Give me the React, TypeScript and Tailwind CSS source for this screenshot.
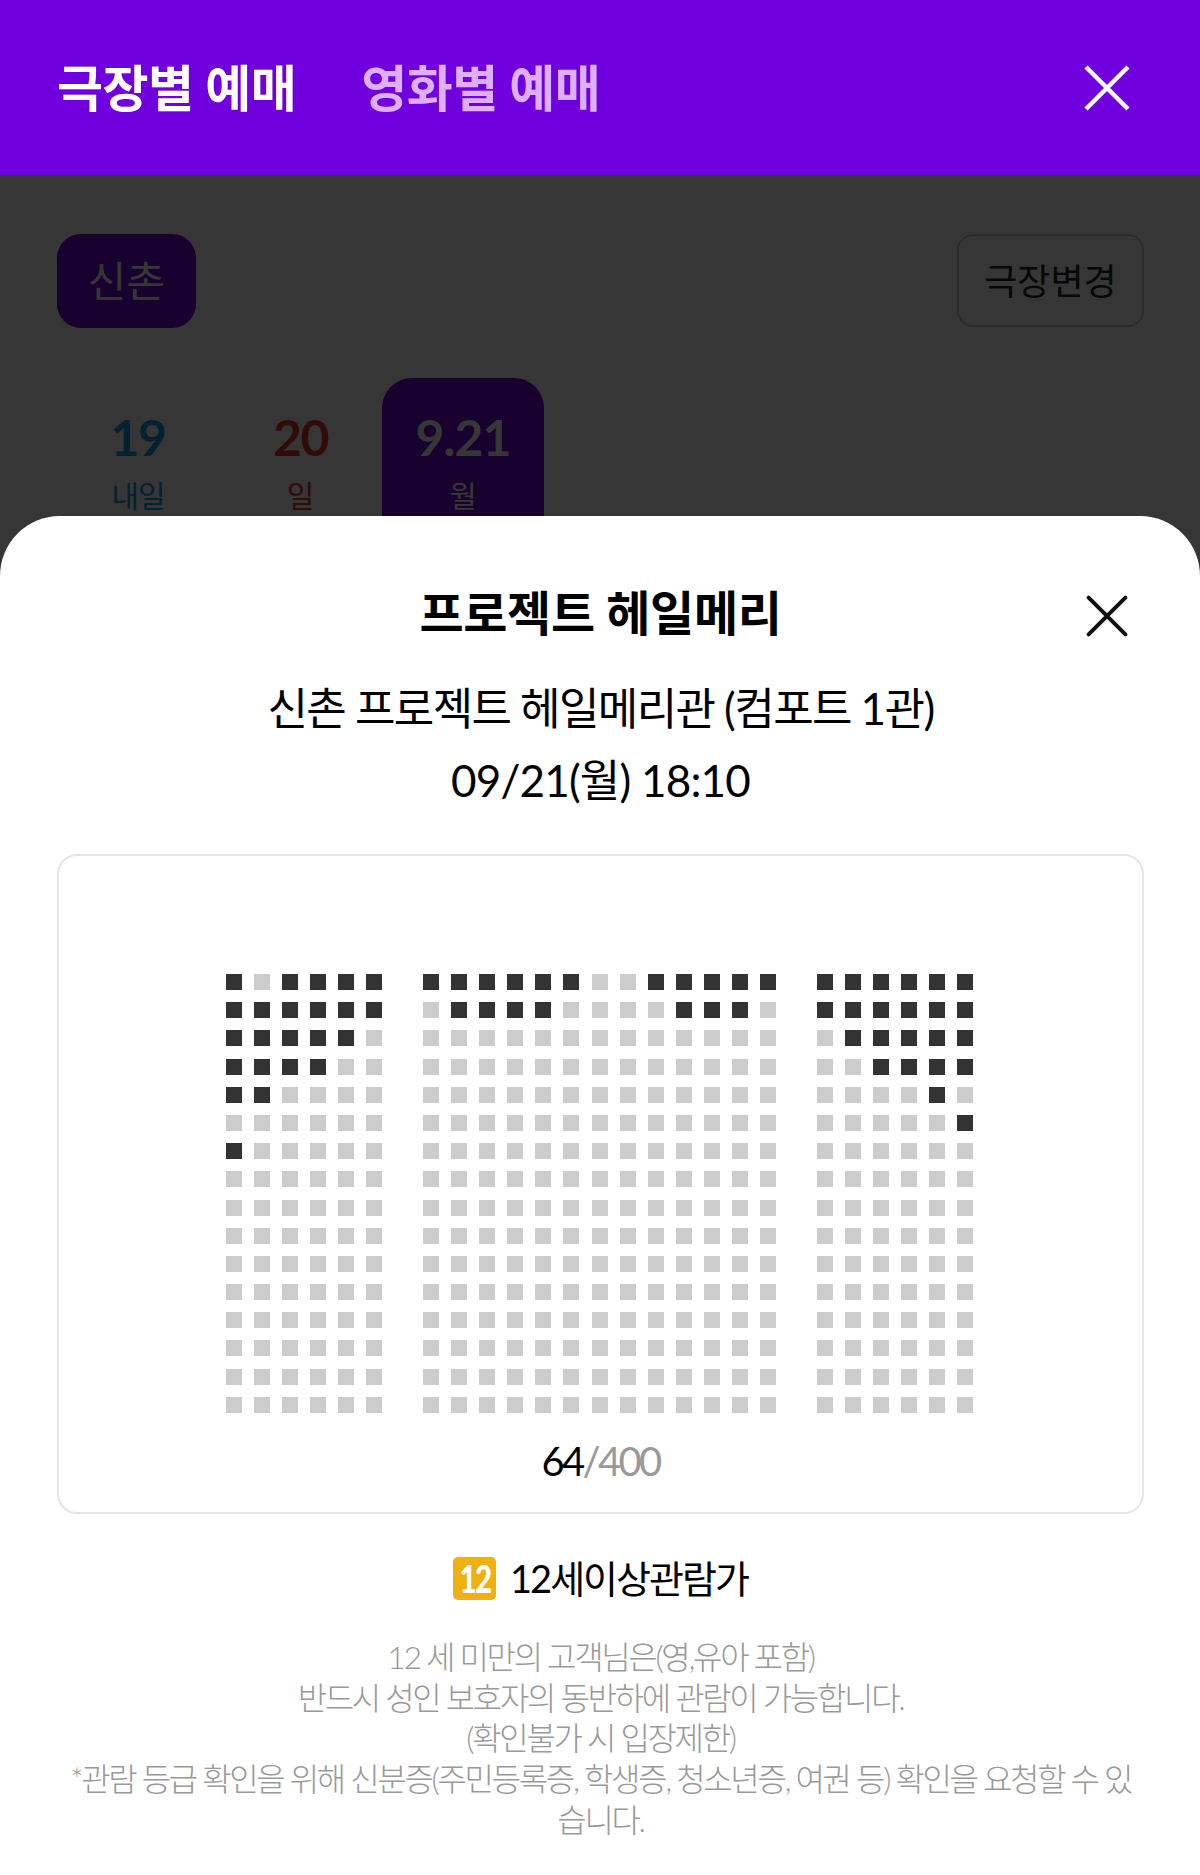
const FONT = 'font-["Lato","Noto_Sans_CJK_KR",sans-serif]';

// 1 = sold seat, rows not listed are all free
const leftSold = ['101111', '111111', '111110', '111100', '110000', '000000', '100000'];
const centerSold = ['1111110011111', '0111100001110'];
const rightSold = ['111111', '111111', '011111', '001111', '000010', '000001'];

function SeatBlock({ cols, sold }: { cols: number; sold: string[] }) {
  const seats = [];
  for (let r = 0; r < 16; r++) {
    for (let c = 0; c < cols; c++) {
      const taken = sold[r]?.[c] === '1';
      seats.push(<div key={`${r}-${c}`} className={`size-4 ${taken ? 'bg-[#333333]' : 'bg-[#cccccc]'}`} />);
    }
  }
  return (
    <div
      className={`grid gap-x-[12.1px] gap-y-[12.2px] ${cols === 6 ? 'grid-cols-[repeat(6,16px)]' : 'grid-cols-[repeat(13,16px)]'}`}
    >
      {seats}
    </div>
  );
}

function CloseIcon({ className, round }: { className: string; round?: boolean }) {
  return (
    <svg
      viewBox="0 0 48 48"
      className={className}
      fill="none"
      stroke="currentColor"
      strokeWidth="4.5"
      strokeLinecap={round ? 'round' : 'butt'}
    >
      <path d="M3 3 L45 45 M45 3 L3 45" />
    </svg>
  );
}

export default function App() {
  return (
    <div className={`relative h-[1875px] w-[1200px] overflow-hidden bg-white ${FONT}`}>
      <header className="relative z-10 flex h-[175px] items-center bg-[#7000dd] pl-[57px] pr-[69px]">
        <div className="flex gap-[65px] text-[50px] leading-none font-bold tracking-[-0.5px]">
          <span className="text-white">극장별 예매</span>
          <span className="text-[#dcb0ff]">영화별 예매</span>
        </div>
        <CloseIcon className="ml-auto size-[48px] text-white" />
      </header>

      <main className="pl-[57px] pr-[56px] pt-[59px]">
        <div className="flex items-start justify-between">
          <div className="flex h-[94px] w-[139px] items-center justify-center rounded-[24px] bg-[#7000dd] text-[42px] text-white">
            신촌
          </div>
          <div className="flex h-[93px] w-[187px] items-center justify-center rounded-[16px] border-2 border-[#cccccc] text-[36px] text-[#222222]">
            극장변경
          </div>
        </div>
        <div className="mt-[50px] flex">
          <div className="flex h-[140px] w-[162px] flex-col items-center pt-[34px] text-[#1a9ad6]">
            <span className="text-[50px] leading-none font-bold tracking-[-1.5px]">19</span>
            <span className="mt-[18px] text-[30px] leading-none tracking-[-1px]">내일</span>
          </div>
          <div className="flex h-[140px] w-[163px] flex-col items-center pt-[34px] text-[#e03a2a]">
            <span className="text-[50px] leading-none font-bold tracking-[-1.5px]">20</span>
            <span className="mt-[18px] text-[30px] leading-none">일</span>
          </div>
          <div className="flex h-[140px] w-[162px] flex-col items-center rounded-t-[30px] bg-[#7000dd] pt-[34px] text-white">
            <span className="text-[50px] leading-none font-bold tracking-[-1px]">9.21</span>
            <span className="mt-[18px] text-[30px] leading-none">월</span>
          </div>
        </div>
      </main>

      <div className="absolute inset-0 bg-black/[.79]" />

      <section className="absolute inset-x-0 top-[516px] bottom-0 z-20 rounded-t-[60px] bg-white pl-[57px] pr-[56px]">
        <CloseIcon round className="absolute top-[79px] right-[72px] size-[42px] text-[#111111]" />
        <h2 className="pt-[68px] text-center text-[48px] leading-[58px] font-bold tracking-[-0.3px] text-black">
          프로젝트 헤일메리
        </h2>
        <p className="mt-[30px] text-center text-[44px] leading-[72px] font-normal text-black">
          <span className="tracking-[-1.6px]">신촌 프로젝트 헤일메리관 (컴포트 1관)</span>
          <br />
          <span className="tracking-[-0.8px]">09/21(월) 18:10</span>
        </p>

        <div className="mt-[38px] flex h-[660px] flex-col items-center rounded-[20px] border-2 border-[#e5e5e5] pt-[118px]">
          <div className="flex gap-[40.5px] pr-[2px]">
            <SeatBlock cols={6} sold={leftSold} />
            <SeatBlock cols={13} sold={centerSold} />
            <SeatBlock cols={6} sold={rightSold} />
          </div>
          <div className="mt-[24px] text-[40px] leading-[48px] font-normal tracking-[-2.7px] text-black">
            64<span className="text-[#999999]">/400</span>
          </div>
        </div>

        <div className="mt-[41px] flex items-center justify-center gap-[14px]">
          <div className="flex size-[43px] items-center justify-center rounded-[5px] bg-[#f0b010]">
            <span className="scale-x-[.78] text-[38px] leading-none font-black tracking-[-2px] text-white">12</span>
          </div>
          <span className="text-[38px] leading-[46px] font-normal tracking-[-2px] text-black">12세이상관람가</span>
        </div>

        <p className="mt-[36px] text-center text-[32px] leading-[40.7px] font-light tracking-[-2.35px] text-[#999999]">
          12 세 미만의 고객님은(영,유아 포함)
          <br />
          반드시 성인 보호자의 동반하에 관람이 가능합니다.
          <br />
          (확인불가 시 입장제한)
          <br />
          *관람 등급 확인을 위해 신분증(주민등록증, 학생증, 청소년증, 여권 등) 확인을 요청할 수 있습니다.
        </p>
      </section>
    </div>
  );
}
